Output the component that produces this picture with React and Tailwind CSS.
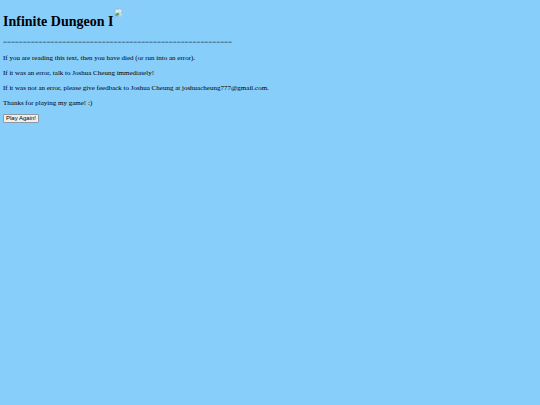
import React from "react";

const messages = [
    "If you are reading this text, then you have died (or run into an error).",
    "If it was an error, talk to Joshua Cheung immediately!",
    "If it was not an error, please give feedback to Joshua Cheung at joshuacheung777@gmail.com.",
    "Thanks for playing my game! :)",
];

// Broken image placeholder next to the title
function MissingImage() {
    return (
        <svg className="w-[18px] h-[18px]" viewBox="0 0 18 18" aria-hidden="true">
            <rect x="0.5" y="0.5" width="17" height="17" fill="none" stroke="#98c8e8" strokeWidth="0.6" />
            <path d="M1 1h4.8l2 2v5H1z" fill="#c5daf4" stroke="#98a9b9" strokeWidth="0.5" />
            <path d="M5.4 1l2.4 2.2H5.4z" fill="#ffffff" />
            <path d="M1.2 7.8V6.4l2.2-2L5.6 6 4 7.8z" fill="#4eaa43" />
            <path d="M4.6 8.4l3.6-3.4v3.4z" fill="#b9d8ee" />
            <ellipse cx="2.9" cy="3.2" rx="1.1" ry="0.8" fill="#ffffff" />
        </svg>
    );
}

export default function App() {
    return (
        <div className="min-h-screen bg-[#87cefa] px-[3px] pt-2 text-black font-['Liberation_Serif',serif]">
            <header className="flex items-start gap-px">
                <h1 className="pt-[6px] text-[14px] leading-[15px] font-bold">Infinite Dungeon I</h1>
                <MissingImage />
            </header>

            <main className="mt-[9px] text-[7px] leading-[8px]">
                <p className="text-[#2c4a5e]">==========================================================</p>
                <div className="mt-2 flex flex-col items-start gap-[7px]">
                    {messages.map((message) => (
                        <p key={message}>{message}</p>
                    ))}
                    <button
                        type="button"
                        className="rounded-[1px] border border-[#8b9aa5] bg-[#efefef] px-[2px] text-[6px] leading-[7px] font-['Liberation_Sans',sans-serif]"
                    >
                        Play Again!
                    </button>
                </div>
            </main>
        </div>
    );
}
